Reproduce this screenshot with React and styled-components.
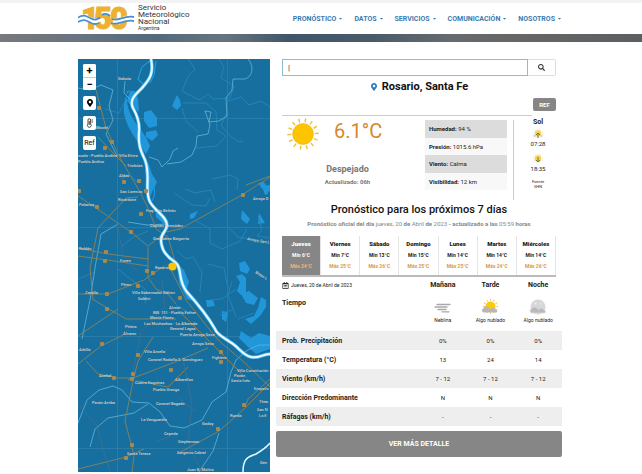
import { useState } from "react"
import styled, { createGlobalStyle } from "styled-components"
import { FaMapMarkerAlt, FaSearch, FaRegCalendarAlt, FaCaretDown } from "react-icons/fa"

const menu = ['PRONÓSTICO', 'DATOS', 'SERVICIOS', 'COMUNICACIÓN', 'NOSOTROS']

const days = [
    { name: 'Jueves', min: 6, max: 24 },
    { name: 'Viernes', min: 7, max: 25 },
    { name: 'Sábado', min: 13, max: 26 },
    { name: 'Domingo', min: 15, max: 25 },
    { name: 'Lunes', min: 14, max: 25 },
    { name: 'Martes', min: 14, max: 24 },
    { name: 'Miércoles', min: 14, max: 26 },
]

const details = [
    ['Humedad:', '94 %'],
    ['Presión:', '1015.6 hPa'],
    ['Viento:', 'Calma'],
    ['Visibilidad:', '12 km'],
]

const rows = [
    ['Prob. Precipitación', '0%', '0%', '0%'],
    ['Temperatura (°C)', '13', '24', '14'],
    ['Viento (km/h)', '7 - 12', '7 - 12', '7 - 12'],
    ['Dirección Predominante', 'N', 'N', 'N'],
    ['Ráfagas (km/h)', '-', '-', '-'],
]

// x, y, name
const towns = [
    [40, 21, 'Gaboto'], [0, 98, 'nuela - Pueblo Andino'], [0, 104, 'Pueblo Andino'],
    [41, 98, 'Villa Elvira'], [49, 108, 'Timbúes'], [41, 118, 'Aldao'], [18, 70, 'Maciel'],
    [42, 134, 'San Lorenzo'], [40, 142, 'Ricardone'], [68, 153, 'Fray Luis Beltrán'],
    [72, 168, 'Capitán Bermúdez'], [75, 181, 'Granadero Baigorria'], [77, 210, 'Rosario'],
    [42, 203, 'Funes'], [1, 191, 'Roldán'], [1, 147, 'Palacios'], [43, 227, 'Pérez'],
    [7, 235, 'Zavalla'], [54, 235, 'Villa Gobernador Gálvez'], [60, 241, 'Soldini'],
    [91, 250, 'Alvear'], [75, 255, 'BW. 151 - Pueblo Esther'], [72, 260, 'Monte Flores'],
    [66, 266, 'Los Muchachos - La Alborada'], [92, 271, 'General Lagos'], [47, 269, 'Piñero'],
    [45, 276, 'Álvarez'], [1, 292, 'Arbilla'], [66, 294, 'Villa Amelia'],
    [70, 302, 'Coronel Rodolfo S. Domínguez'], [21, 318, 'Acebal'], [57, 325, 'Cuatro Esquinas'],
    [75, 332, 'Pueblo Uranga'], [14, 345, 'Pavón Arriba'], [78, 346, 'Coronel Bogado'],
    [63, 362, 'La Vanguardia'], [86, 376, 'Cepeda'], [49, 396, 'Santa Teresa'],
    [102, 277, 'Puerto Arroyo Seco'], [114, 286, 'Arroyo Seco'], [134, 300, 'Fighiera'],
    [159, 313, 'Villa Constitución'], [156, 318, 'Pavón'], [153, 323, 'Santa Inés'],
    [176, 331, 'Empalm'], [97, 322, 'Albarellos'], [181, 344, 'Theo'],
    [179, 352, 'San N'], [181, 358, 'La E'], [152, 358, 'Rueda'],
    [124, 366, 'Godoy'], [100, 384, 'Stephenson'], [99, 395, 'Sargento Cabral'],
    [109, 412, 'Juan B. Molina'], [182, 405, 'Gen'], [175, 141, 'Arroyo D'],
]

const roadMarks = [
    [21, 49], [34, 83], [27, 89], [46, 123], [61, 122], [1, 132], [19, 148], [53, 173], [63, 155],
    [28, 193], [27, 202], [69, 212], [60, 227], [75, 214], [29, 235], [29, 250],
    [102, 239], [24, 285], [60, 296], [55, 315], [54, 320], [36, 319], [93, 311],
    [54, 386], [48, 399], [140, 370], [166, 346], [143, 293], [143, 303], [68, 132], [165, 136],
]

const RIVER = 'M73 0c3 14-1 20-9 29-7 7-13 12-9 20 4 7 7 15 6 24-1 14 2 19 6 28 6 15-1 31 5 42 5 9 17 15 17 23 0 6-6 8-6 15 0 10 6 17 14 22 8 6 2 18 12 30 9 10 20 23 28 37 2 6 10 9 15 13 8 4 12 13 21 15 8 2 11-3 19-3'

const Logo = () => (
    <LogoLink href="#">
        <svg width="58" height="26" viewBox="0 0 58 26" aria-hidden="true">
            <text x="3 16 32" y="24" fill="#eeb12f" stroke="#eeb12f" strokeWidth="1" fontFamily="Roboto, sans-serif" fontWeight="900" fontSize="31">150</text>
            <g fill="none" stroke="#fff" strokeWidth="5">
                <path d="M0 14c6-4 9-1 13 1s5 1 7 0M35 16c6 2 11-5 21-3" />
            </g>
            <g fill="none" stroke="#4b8fd0" strokeWidth="1.800">
                <path d="M0 12.500c6-4 9-1 13 1s6 1 9-1M0 17c6-4 9-1 13 1s6 1 8 0" />
                <path d="M24 10c3-2 6-1 8 1M34 14c7 3 11-4 22-2M33 18c8 3 12-4 23-2" />
            </g>
        </svg>
        <LogoText>
            <span>Servicio</span>
            <span>Meteorológico</span>
            <span>Nacional</span>
            <small>Argentina</small>
        </LogoText>
    </LogoLink>
)

const RiverMap = () => (
    <MapSvg viewBox="0 0 192 413" preserveAspectRatio="xMidYMid slice" role="img" aria-label="Mapa de Rosario">
        <rect width="192" height="413" fill="#176f9f" />
        <g stroke="#3785ae" strokeWidth="0.6">
            <path d="M39.500 0V413M149.500 0V413M0 59.500H192M0 168.500H192M0 277.500H192M0 389.500H192" />
        </g>
        {/* islands and lagoons */}
        <g fill="#2196d8">
            <path d="M52 31c-5 6-7 14-6 23 2 14 12 26 22 41l4-8c-4-12-12-18-18-29-5-9-6-18-5-26z" />
            <path d="M52 32l5 0 3 8 1 13-6-5-6-6zM66 53l7-2 6 8 0 8-8 2-5-7zM68 73l10-2 2 5-6 6-6-4z" />
            <path d="M99 36l3 5 1 6-4 4-5-4z" />
            <path d="M70 103l4 12 5 8-4 8-3 7-2-14-3-12z" />
            <path d="M78 148l5 10 6 6-2 2-9-8zM84 182l4 12 8 6-3 1-8-9z" />
            <path d="M100 206l6 5 5 12-3 9 6 10-5-2-8-16z" />
            <path d="M112 155l8-3-4 7-4 1zM164 151l8 9-3 5-6-5zM181 154l6 10-7 1zM182 127l6 7 4-2v-6l-7 1z" />
            <path d="M161 204l6-2 5 8-3 5-7-3zM158 217l6-2 4 4 0 14-5 3-4-4 3-9zM163 235l8-3 9 7-4 7-8-2z" />
            <path d="M183 238l5 3 0 7-6 9-9 8-6-5 9-3 4-8z" />
            <path d="M128 241l7 0 2 6-8 1zM144 252l6 1-2 10-4-3z" />
            <path d="M163 272l10 7 8-5 11 3v13l-14 5-9-8-8-8z" />
        </g>
        <g fill="none" stroke="#2196d8" strokeWidth="1.200">
            <path d="M74 0l-10 8-4 12 6 6M78 2l-2 14-4 8M70 118c8 8 8 18 4 24" />
        </g>
        <g fill="none" stroke="#2484b8" strokeWidth="1">
            <path d="M110 0l7 10-7 8-6 14 13 7 5 2 8-6 5 5 17-1 4-12-13-8 3-11-5-8" />
            <path d="M105 44l23 0 10 9 1 18 9 6-9 10-21 2M150 42l13-4 8 8 12-4 9 6" />
            <path d="M104 49l4 13 12 11M149 54l-6 12 8 10 10 7 4-1M134 120l18-4 8 4-1 11M107 130l10 4 16-3 4 12" />
            <path d="M96 134l18 12 14 1 4-8M118 162l14 8 0 14 12 6 18-8 7-12M150 168l10 10 12 2 9 4" />
            <path d="M99 192l9 8 7-2 9 15-2 20M130 205l16 4 4 20M158 230l-14 10-12 1M180 157l4 14-5 6 13 2" />
            <path d="M98 246l14 8M156 250l-14 6M160 260l16-6M154 222l-4 14 8 22" />
            <path d="M46 44l-5 10-14-4M60 124l-9-9-8 5M44 187l10-8 16-7M40 210l15 12 12 8 0 14M0 220l17-7" />
        </g>
        <path d="M186 123l-6 1 5 6 2 6 3-1-1-7z" fill="#2196d8" />
        <g fill="none" stroke="#64b4d5" strokeWidth="0.8">
            <path d="M0 29l12 2 11-5 12 5-4 16 4 14-7 14 7 14 4 8M47 22l-1 12 6 6" />
            <path d="M170 0c7 8 4 18-3 20l-12 0-1 11-6 8 1 18-8 5-10 1 2-10-6-1 5 14-2 9-11 2-1 10-4 9-11 7-14 2" />
            <path d="M71 98l9 3 4 7 8-8 3-8 5-3M40 165l-17 10-5 28-6 38-8 39M50 163l19 3 20-1" />
            <path d="M0 364l9-23 12-10 14-4 9 4 10 12 17 1 11 9 10 14 14 2 18-8 10-18 14-10 5-20 5-12 10-9 13-6 11 0" />
            <path d="M12 388l5-18 13-11 26-5 14-9M141 374l-6 18-14 21" />
        </g>
        {/* roads */}
        <g fill="none" stroke="#7d8264" strokeWidth="1">
            <path d="M18 31l10 38 13 28 21 36 8 16 8 20M0 137l18 12 35 24 17 14M60 138l-12 1-28 30-8 40 3 31M20 78l16 17 12 12" />
            <path d="M0 189l30 6 40 5M0 197l36 5 34 5M70 188v30l8 12 12 5 8 10M0 235l30 0 36-14 20-14M14 240l34 20 50 0" />
            <path d="M0 277l40-27M70 187l18-14 14-3 62-34 28-18" />
            <path d="M78 170l12 8 8 28M90 205l18 36 32 40 27 23 25 24M104 255l36 36 23 23" />
            <path d="M75 278l-15 24-5 20-8 40 9 34-2 17M0 305l23-18 22-11M8 302l12 13 20 4 16 0M50 321l47-18 33-14" />
            <path d="M0 410l48-12 18-8M99 395l42-23 25-22 26-26M60 322l30 6 20-20" />
            <path d="M192 320l-22 20-3 8M168 126l24-9" />
        </g>
        <g fill="none" stroke="#456f8c" strokeWidth="0.8">
            <path d="M105 300l9 45-4 38 14 30M0 345l18 20 14 48M84 220l3 28-24 25-8 40M60 212l-14-12-7-36M139 270l4 16M79 382l12-4M99 338l19 15" />
        </g>
        <path d="M192 384c-4 5-9 8-14 11-7 3-13 3-13 18" fill="none" stroke="#e6f7ff" strokeWidth="1.500" />
        <path d={RIVER} fill="none" stroke="#4bbcf2" strokeWidth="3.500" />
        <path d={RIVER} fill="none" stroke="#edf9ff" strokeWidth="2" />
        {roadMarks.map(([x, y]) => (
            <rect key={`${x}-${y}`} x={x - 2} y={y - 2} width="4" height="4" rx="1" fill="#a5894f" />
        ))}
        <g fontFamily="Roboto, sans-serif" fontSize="4" fontWeight="500" fill="#dccfc2">
            {towns.map(([x, y, name]) => <text key={name} x={x} y={y}>{name}</text>)}
            <text x="169" y="181" transform="rotate(10 169 181)">Arroyo San L</text>
            <text x="177" y="214" transform="rotate(32 177 214)">Brazo L</text>
        </g>
        <circle cx="94.500" cy="207.500" r="4" fill="#fdc600" />
    </MapSvg>
)

const Thermometer = () => (
    <svg width="7" height="10" viewBox="0 0 7 10" fill="none" stroke="#333" strokeWidth="0.9">
        <path d="M2 6V2a1.300 1.300 0 0 1 2.600 0v4a1.900 1.900 0 1 1-2.600 0zM3.300 3v4M5.500 2h1.500M5.500 4h1.500" />
    </svg>
)

const Sun = () => (
    <svg width="32" height="32" viewBox="0 0 32 32">
        <circle cx="16" cy="16" r="10.500" fill="#fdc400" stroke="#f3b21b" strokeWidth="0.6" />
        <g stroke="#e9c440" strokeWidth="1.500" strokeLinecap="round">
            {Array.from({ length: 14 }, (_, i) => (
                <path key={i} d="M16 3.500V0.800" transform={`rotate(${i * 360 / 14 + 10} 16 16)`} />
            ))}
        </g>
    </svg>
)

const SunMove = ({ down }) => (
    <svg width="10" height="10" viewBox="0 0 10 10">
        <circle cx="5" cy="4.500" r="3.200" fill="#f6d64c" />
        <circle cx="5" cy="4.500" r="4.200" fill="none" stroke="#eedb8b" strokeWidth="0.8" strokeDasharray="1 1" />
        <path d={down ? 'M5 3v5M3 6l2 2 2-2' : 'M5 9V4M3 6l2-2 2 2'} fill="none" stroke="#666" strokeWidth="0.9" />
        {!down && <path d="M0.500 7h2M7.500 7h2" stroke="#999" strokeWidth="0.8" />}
    </svg>
)

const Mist = () => (
    <svg width="18" height="16" viewBox="0 0 18 16" stroke="#a9a9a9" strokeWidth="1.300" strokeLinecap="round">
        <path d="M3 5.500h13M1 8h12M4 10.500h8M8 12.800h7" />
    </svg>
)

const SunCloud = () => (
    <svg width="18" height="16" viewBox="0 0 18 16">
        <circle cx="9.500" cy="7.500" r="5" fill="#fdc90d" />
        <g stroke="#eec33c" strokeWidth="0.9">
            {Array.from({ length: 12 }, (_, i) => (
                <path key={i} d="M9.500 1.700V0" transform={`rotate(${i * 30} 9.500 7.500)`} />
            ))}
        </g>
        <path d="M2.500 13.500a2.200 2.200 0 0 1 0-4.200 2.800 2.800 0 0 1 4.500-1.500l2.500 2.400 1.500-1a2.500 2.500 0 0 1 3.800 1.300c2 .2 2 3 0 3z" fill="#b7b7b7" />
    </svg>
)

const MoonCloud = () => (
    <svg width="18" height="16" viewBox="0 0 18 16">
        <circle cx="9" cy="8" r="7.500" fill="#d6d6d6" />
        <path d="M5 4l2-1 1 2-2 1zM11 3l2 2-2 1z" fill="#e9e9e9" />
        <path d="M2.500 14a2.200 2.200 0 0 1 0-4.200 3 3 0 0 1 5-1l2 1.800 1.500-1a2.500 2.500 0 0 1 4 1.300c2 .2 2 3.100 0 3.100z" fill="#b9b9b9" stroke="#e4e4e4" strokeWidth="0.6" />
    </svg>
)

const forecastIcons = [
    { icon: <Mist />, text: 'Neblina' },
    { icon: <SunCloud />, text: 'Algo nublado' },
    { icon: <MoonCloud />, text: 'Algo nublado' },
]

const App = () => {

    const [selected, setSelected] = useState(0)
    const [search, setSearch] = useState('')

    return (
        <>
            <GlobalStyle />
            <Header>
                <Logo />
                <Nav>
                    {menu.map(item => <a href="#" key={item}>{item}<FaCaretDown /></a>)}
                </Nav>
            </Header>
            <Banner />
            <Main>
                <MapBox>
                    <RiverMap />
                    <MapControls>
                        <ZoomGroup>
                            <MapButton aria-label="Acercar">+</MapButton>
                            <MapButton aria-label="Alejar">−</MapButton>
                        </ZoomGroup>
                        <MapButton aria-label="Ubicación"><FaMapMarkerAlt size={8} /></MapButton>
                        <MapButton aria-label="Temperatura"><Thermometer /></MapButton>
                        <MapButton $small>Ref</MapButton>
                    </MapControls>
                </MapBox>
                <Panel>
                    <Padded>
                        <SearchForm onSubmit={(e) => e.preventDefault()}>
                            <input aria-label="Buscar localidad" placeholder="|" value={search} onChange={(e) => setSearch(e.target.value)} />
                            <button aria-label="Buscar"><FaSearch size={7} /></button>
                        </SearchForm>
                        <City><FaMapMarkerAlt size={8} color="#2b7bb9" />Rosario, Santa Fe</City>
                        <RefButton>REF</RefButton>
                        <Divider />
                    </Padded>
                    <Current>
                        <div>
                            <TempRow>
                                <Sun />
                                <Temp>6.1°C</Temp>
                            </TempRow>
                            <Condition>Despejado</Condition>
                            <Updated>Actualizado: 06h</Updated>
                        </div>
                        <Details>
                            {details.map(([label, value]) => <li key={label}><b>{label}</b> {value}</li>)}
                        </Details>
                        <SunTimes>
                            <b>Sol</b>
                            <SunMove />
                            <span>07:28</span>
                            <SunMove down />
                            <span>18:35</span>
                            <small>Fuente<br />SHN</small>
                        </SunTimes>
                    </Current>
                    <Heading>Pronóstico para los próximos 7 días</Heading>
                    <Official><b>Pronóstico oficial del día</b> jueves, 20 <b>de</b> Abril <b>de</b> 2023 <b>- actualizado a las</b> 05:59 <b>horas</b></Official>
                    <Days>
                        {days.map((day, i) => (
                            <Day key={day.name} $active={i === selected} onClick={() => setSelected(i)}>
                                <strong>{day.name}</strong>
                                <span>Mín {day.min}°C</span>
                                <Max>Máx {day.max}°C</Max>
                            </Day>
                        ))}
                    </Days>
                    <Forecast>
                        <thead>
                            <tr>
                                <th><DateLabel><FaRegCalendarAlt size={7} />Jueves, 20 de Abril de 2023</DateLabel></th>
                                <th>Mañana</th>
                                <th>Tarde</th>
                                <th>Noche</th>
                            </tr>
                        </thead>
                        <tbody>
                            <WeatherRow>
                                <th>Tiempo</th>
                                {forecastIcons.map((item, i) => <td key={i}>{item.icon}<p>{item.text}</p></td>)}
                            </WeatherRow>
                            {rows.map(([label, ...values]) => (
                                <DataRow key={label}>
                                    <th>{label}</th>
                                    {values.map((value, i) => <td key={i}>{value}</td>)}
                                </DataRow>
                            ))}
                        </tbody>
                    </Forecast>
                    <MoreButton>VER MÁS DETALLE</MoreButton>
                </Panel>
            </Main>
        </>
    )
}

const GlobalStyle = createGlobalStyle`
    * {
        box-sizing: border-box;
    }
    body {
        margin: 0;
        background-color: white;
        color: #222;
        font-family: Roboto, sans-serif;
        font-size: 7px;
    }
    button, input {
        font-family: inherit;
        margin: 0;
        padding: 0;
    }
    h1, h2, p, ul {
        margin: 0;
        padding: 0;
    }
    button {
        cursor: pointer;
    }
`
const Header = styled.header`
    display: flex;
    justify-content: space-between;
    align-items: center;
    height: 34px;
    padding: 0 80px 0 78px;
    border-top: 3px solid #f3f3f3;
`
const LogoLink = styled.a`
    display: flex;
    align-items: center;
    gap: 2px;
    padding-bottom: 2px;
    color: #333;
    text-decoration: none;
`
const LogoText = styled.div`
    display: flex;
    flex-direction: column;
    font-size: 8px;
    line-height: 7px;

    small {
        font-size: 5px;
        line-height: 6px;
    }
`
const Nav = styled.nav`
    display: flex;
    gap: 11px;

    a {
        display: flex;
        align-items: center;
        gap: 2px;
        color: #3c7ab0;
        font-size: 7px;
        font-weight: bold;
        text-decoration: none;
    }
    svg {
        width: 5px;
        height: 5px;
    }
`
const Banner = styled.div`
    height: 8px;
    background: linear-gradient(90deg, #77797b 0%, #697480 12%, #526a7c 24%, #68747d 35%, #3f5668 45%, #4a5b68 58%, #666b6e 70%, #666 80%, #5c5f61 100%);
`
const Main = styled.main`
    display: grid;
    grid-template-columns: 192fr 286fr;
    gap: 6px;
    padding: 17px 80px 2px 78px;
`
const MapBox = styled.section`
    position: relative;
    min-width: 0;
`
const MapSvg = styled.svg`
    display: block;
    width: 100%;
    height: 413px;
`
const MapControls = styled.div`
    position: absolute;
    top: 5px;
    left: 5px;
    display: flex;
    flex-direction: column;
    gap: 6px;
`
const MapButton = styled.button`
    display: flex;
    align-items: center;
    justify-content: center;
    width: 13px;
    height: 14px;
    border: none;
    border-radius: 2px;
    background-color: white;
    color: black;
    font-size: ${props => props.$small ? '7px' : '11px'};
    font-weight: ${props => props.$small ? 'normal' : 'bold'};
    line-height: 1;
`
const ZoomGroup = styled.div`
    display: flex;
    flex-direction: column;
    border-radius: 2px;
    background-color: white;

    ${MapButton} {
        height: 13px;
    }
    ${MapButton} + ${MapButton} {
        border-top: 1px solid #ccc;
        border-radius: 0 0 2px 2px;
    }
`
const Panel = styled.section`
    min-width: 0;
`
const Padded = styled.div`
    padding: 0 6px;
`
const SearchForm = styled.form`
    display: flex;
    height: 17px;

    input {
        flex: 1;
        min-width: 0;
        padding: 0 5px;
        border: 1px solid #86bfd3;
        outline: none;
        font-size: 8px;
    }
    input::placeholder {
        color: #333;
    }
    button {
        display: flex;
        align-items: center;
        justify-content: center;
        width: 28px;
        border: 1px solid #ddd;
        border-left: none;
        border-radius: 0 2px 2px 0;
        background-color: white;
        color: #333;
    }
`
const City = styled.h1`
    display: flex;
    align-items: center;
    justify-content: center;
    gap: 4px;
    font-size: 11px;
    font-weight: bold;
    line-height: 22px;
    color: #111;
`
const RefButton = styled.button`
    display: block;
    width: 23px;
    height: 13px;
    margin-left: auto;
    border: none;
    border-radius: 2px;
    background-color: #868686;
    color: white;
    font-size: 6px;
    font-weight: bold;
`
const Divider = styled.hr`
    margin: 4px 24px 0 0;
    border: none;
    border-top: 1px solid #ccc;
`
const Current = styled.div`
    display: grid;
    grid-template-columns: 1fr 82px 49px;
    gap: 6px;
    height: 84px;
    padding-left: 6px;
`
const TempRow = styled.div`
    display: flex;
    gap: 15px;
    padding: 2px 0 0 5px;
`
const Temp = styled.span`
    font-size: 20px;
    line-height: 26px;
    color: #d8862d;
`
const Condition = styled.p`
    margin-top: 13px;
    padding-right: 6px;
    color: #777;
    font-size: 9px;
    font-weight: bold;
    line-height: 12px;
    text-align: center;
`
const Updated = styled.p`
    padding-right: 6px;
    color: #777;
    font-size: 6px;
    font-weight: bold;
    line-height: 14px;
    text-align: center;
`
const Details = styled.ul`
    padding-top: 4px;
    list-style: none;

    li {
        padding: 0 4px;
        background-color: #f8f8f8;
        font-size: 6px;
        line-height: 17px;
    }
    li:nth-child(odd) {
        background-color: #dcdcdc;
        line-height: 18px;
    }
`
const SunTimes = styled.div`
    display: flex;
    flex-direction: column;
    align-items: center;
    margin-top: 4px;
    border-left: 1px solid #ccc;
    font-size: 6px;
    line-height: 10px;

    b {
        font-size: 7px;
        line-height: 4px;
        margin-bottom: 5px;
    }
    span {
        margin-bottom: 5px;
    }
    small {
        font-size: 4px;
        line-height: 5px;
        text-align: center;
    }
`
const Heading = styled.h2`
    font-size: 11px;
    font-weight: 500;
    line-height: 19px;
    text-align: center;
    color: #111;
`
const Official = styled.p`
    color: #888;
    font-size: 6px;
    line-height: 10px;
    text-align: center;
`
const Days = styled.div`
    display: flex;
    height: 41px;
    margin: 7px 6px 0;
    border-bottom: 2px solid #bbb;
`
const Max = styled.span`
    color: #d79a4b;
`
const Day = styled.button`
    display: flex;
    flex: 1;
    flex-direction: column;
    align-items: center;
    min-width: 0;
    padding-top: 2px;
    border: none;
    border-right: 1px solid #e5e5e5;
    background-color: ${props => props.$active ? '#868686' : 'white'};
    color: ${props => props.$active ? 'white' : '#222'};
    font-size: 5px;
    font-weight: bold;
    line-height: 11px;

    strong {
        font-size: 6px;
        line-height: 12px;
    }
    ${Max} {
        color: ${props => props.$active ? '#e8b878' : '#d79a4b'};
    }
`
const Forecast = styled.table`
    width: 100%;
    table-layout: fixed;
    border-collapse: collapse;

    th, td {
        height: 16px;
        padding: 0;
        text-align: center;
    }
    th {
        font-size: 7px;
        font-weight: bold;
    }
    th:first-child {
        width: 50%;
        padding-left: 6px;
        text-align: left;
    }
    td {
        font-size: 6px;
    }
`
const DateLabel = styled.span`
    display: flex;
    align-items: center;
    gap: 2px;
    font-size: 5px;
    font-weight: normal;
`
const WeatherRow = styled.tr`
    th, td {
        height: 38px;
        padding-top: 6px;
        vertical-align: top;
    }
    svg {
        display: block;
        margin: 0 auto;
    }
    p {
        font-size: 5px;
        line-height: 10px;
        white-space: nowrap;
    }
`
const DataRow = styled.tr`
    background-color: white;

    &:nth-child(even) {
        background-color: #eee;
    }
    th, td {
        height: 19px;
    }
`
const MoreButton = styled.button`
    display: block;
    width: 100%;
    height: 26px;
    margin-top: 5px;
    border: none;
    border-radius: 2px;
    background-color: #868686;
    color: white;
    font-size: 7px;
    font-weight: bold;
`

export default App
